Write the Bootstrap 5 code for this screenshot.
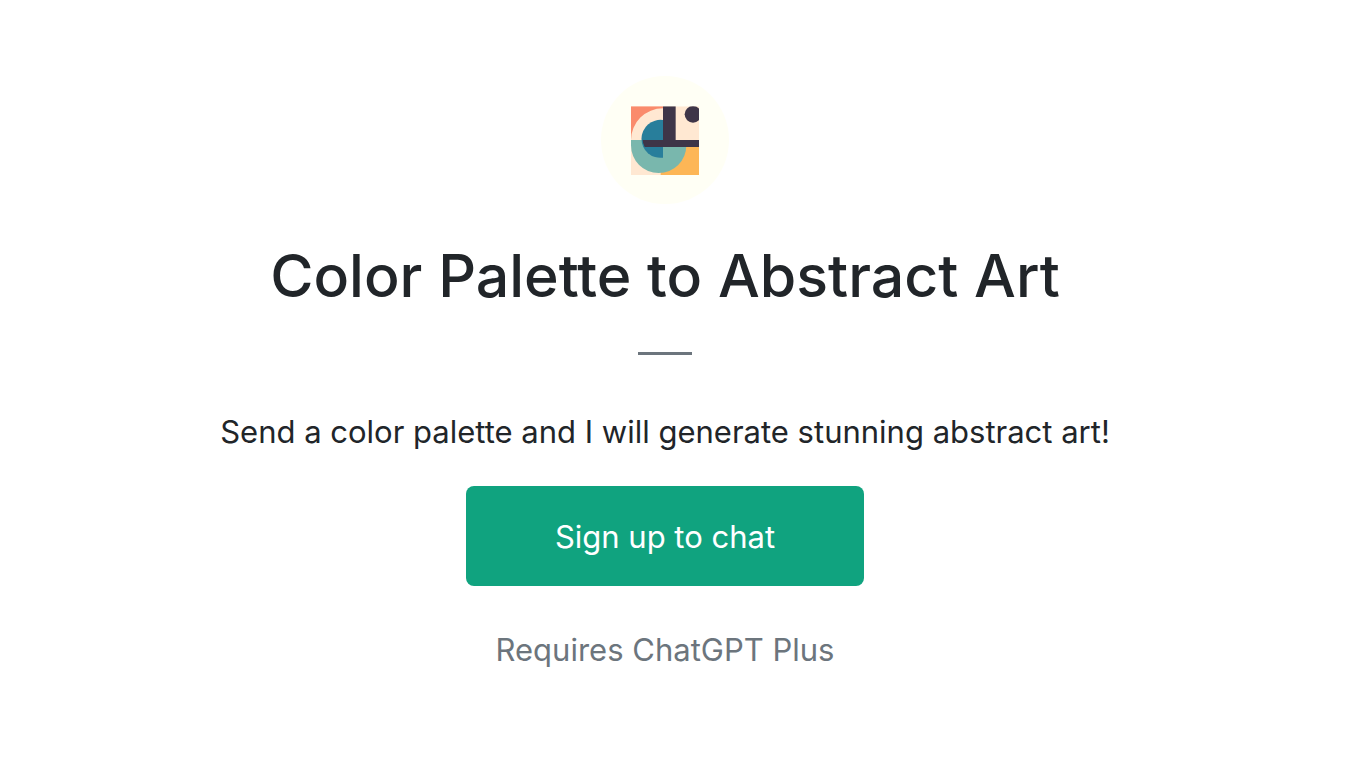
<!DOCTYPE html>
<html lang="en">
<head>
<meta charset="utf-8">
<meta name="viewport" content="width=device-width, initial-scale=1">
<title>Color Palette to Abstract Art</title>
<link href="https://cdn.jsdelivr.net/npm/bootstrap@5.3.0/dist/css/bootstrap.min.css" rel="stylesheet">
<style>
body { font-family: Inter, "Liberation Sans", sans-serif; color: #212529; font-size: 31px; line-height: 48px; }
.intro { padding: 76px 30px 48px 0; }
.avatar { width: 128px; height: 128px; }
.title { font-size: 59px; line-height: 72px; font-weight: 500; margin: 36px 0 0; }
.divider { width: 54px; height: 3px; background: #6c757d; opacity: 1; border: 0; margin: 40px 0 53px; }
.btn-signup { --bs-btn-color: #fff; --bs-btn-bg: #10a37f; --bs-btn-hover-color: #fff; --bs-btn-hover-bg: #0d8c6d; --bs-btn-active-bg: #0b7a5f; --bs-btn-active-color: #fff; --bs-btn-border-width: 0; --bs-btn-border-radius: 8px; width: 398px; max-width: 100%; font-size: 31px; line-height: 48px; padding: 27px 16px 25px; margin: 30px 0 40px; }
.requires { color: #6c757d; }
</style>
</head>
<body>
<main class="intro container-fluid d-flex flex-column align-items-center text-center">
  <svg class="avatar" viewBox="33 30 384 384" role="img" aria-label="Abstract geometric art">
    <defs>
      <clipPath id="frame"><rect x="123" y="121" width="204" height="206"/></clipPath>
    </defs>
    <circle cx="225" cy="222" r="192" fill="#fffff5"/>
    <g clip-path="url(#frame)">
      <rect x="123" y="121" width="204" height="206" fill="#ffe8d2"/>
      <path d="M123 121H219V127A96 95 0 0 0 123 222Z" fill="#fa8b6c"/>
      <rect x="212" y="236" width="115" height="91" fill="#fdb656"/>
      <path d="M123 222H289V238A83 83 0 0 1 123 238Z" fill="#79b7ad"/>
      <path d="M219 162A57 57 0 1 0 219 275Z" fill="#287e9b"/>
      <path d="M219 121H257V222H327V243H164Q158 232 158 222H219Z" fill="#3e3548"/>
      <circle cx="309" cy="145" r="25" fill="#3e3548"/>
    </g>
  </svg>
  <h1 class="title">Color Palette to Abstract Art</h1>
  <hr class="divider">
  <p class="mb-0">Send a color palette and I will generate stunning abstract art!</p>
  <button type="button" class="btn btn-signup">Sign up to chat</button>
  <p class="requires mb-0">Requires ChatGPT Plus</p>
</main>
<script src="https://cdn.jsdelivr.net/npm/bootstrap@5.3.0/dist/js/bootstrap.bundle.min.js"></script>
</body>
</html>
